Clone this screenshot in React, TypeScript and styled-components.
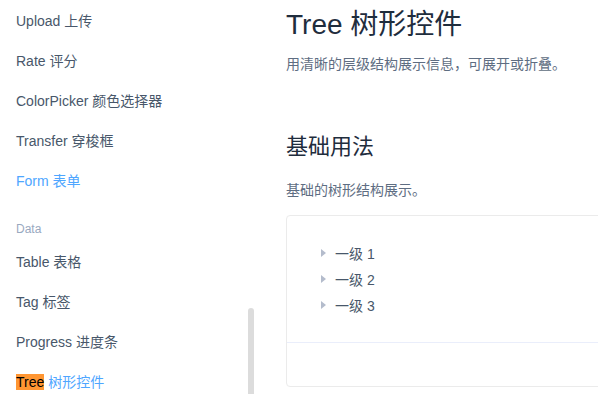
import React from "react";
import styled, { createGlobalStyle } from "styled-components";

const Global = createGlobalStyle`
  html, body { margin: 0; padding: 0; background: #fff; }
  body {
    width: 598px; height: 394px; overflow: hidden;
    font-family: "Liberation Sans", Arial, "Noto Sans CJK SC", sans-serif;
    -webkit-font-smoothing: antialiased;
  }
`;

const Page = styled.div`
  display: flex;
  width: 598px;
  height: 394px;
  overflow: hidden;
`;

const Sidebar = styled.nav`
  position: relative;
  flex: 0 0 256px;
  height: 394px;
  overflow: hidden;
`;

const NavList = styled.ul`
  list-style: none;
  margin: 0;
  padding: 1px 0 0 16px;
`;

const NavItem = styled.li<{ $active?: boolean }>`
  font-size: 14px;
  line-height: 40px;
  height: 40px;
  color: ${(p) => (p.$active ? "#4ea6ff" : "#48576a")};
  white-space: nowrap;
`;

const GroupTitle = styled.li`
  font-size: 12px;
  line-height: 26px;
  margin-top: 15px;
  color: #99a9bf;
`;

const Mark = styled.span`
  background: #ff9632;
  color: #000;
`;

const ScrollThumb = styled.div`
  position: absolute;
  left: 248px;
  top: 308px;
  width: 6px;
  height: 100px;
  border-radius: 3px;
  background: #dcdcdc;
`;

const Main = styled.main`
  flex: 1;
  padding-left: 30px;
  min-width: 0;
`;

const Title = styled.h2`
  margin: 0;
  font-size: 28px;
  font-weight: 400;
  line-height: 50px;
  color: #1f2d3d;
  white-space: nowrap;
`;

const Desc = styled.p<{ $top: number }>`
  margin: ${(p) => p.$top}px 0 0;
  font-size: 14px;
  line-height: 22px;
  color: #5e6d82;
  white-space: nowrap;
`;

const SubTitle = styled.h3`
  margin: 57px 0 0;
  font-size: 22px;
  font-weight: 400;
  line-height: 30px;
  color: #1f2d3d;
`;

const DemoBlock = styled.div`
  margin-top: 14px;
  width: 400px;
  border: 1px solid #ebebeb;
  border-radius: 4px;
`;

const DemoSource = styled.div`
  padding: 24px;
  border-bottom: 1px solid #eaeefb;
`;

const Meta = styled.div`
  height: 43px;
`;

const Tree = styled.ul`
  list-style: none;
  margin: 0;
  padding: 0;
`;

const TreeNode = styled.li`
  display: flex;
  align-items: center;
  height: 26px;
  font-size: 14px;
  color: #48576a;
`;

const ExpandIcon = styled.span`
  width: 0;
  height: 0;
  margin-left: 10px;
  margin-right: 9px;
  border-top: 4px solid transparent;
  border-bottom: 4px solid transparent;
  border-left: 5px solid #b4bccc;
`;

const navTop = ["Upload 上传", "Rate 评分", "ColorPicker 颜色选择器", "Transfer 穿梭框"];
const navData = ["Table 表格", "Tag 标签", "Progress 进度条"];

export default function App() {
  return (
    <>
      <Global />
      <Page>
        <Sidebar>
          <NavList>
            {navTop.map((t) => (
              <NavItem key={t}>{t}</NavItem>
            ))}
            <NavItem $active>Form 表单</NavItem>
            <GroupTitle>Data</GroupTitle>
            {navData.map((t) => (
              <NavItem key={t}>{t}</NavItem>
            ))}
            <NavItem $active>
              <Mark>Tree</Mark> 树形控件
            </NavItem>
          </NavList>
          <ScrollThumb />
        </Sidebar>
        <Main>
          <Title>Tree 树形控件</Title>
          <Desc $top={3}>用清晰的层级结构展示信息，可展开或折叠。</Desc>
          <SubTitle>基础用法</SubTitle>
          <Desc $top={17}>基础的树形结构展示。</Desc>
          <DemoBlock>
            <DemoSource>
              <Tree>
                {["一级 1", "一级 2", "一级 3"].map((t) => (
                  <TreeNode key={t}>
                    <ExpandIcon />
                    {t}
                  </TreeNode>
                ))}
              </Tree>
            </DemoSource>
            <Meta />
          </DemoBlock>
        </Main>
      </Page>
    </>
  );
}
